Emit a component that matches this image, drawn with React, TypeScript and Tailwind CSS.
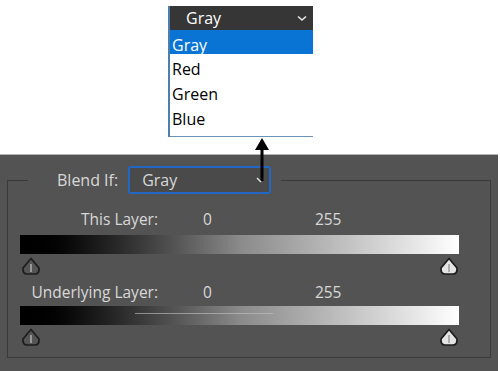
import React from "react";

function Slider({ filled }: { filled: boolean }) {
  return (
    <svg width="20" height="19" viewBox="0 0 20 19">
      <path
        d="M10 1.5 L18 11 Q18.5 17 14 17 H6 Q1.5 17 2 11 Z"
        fill={filled ? "#e4e4e4" : "#555555"}
        stroke="#1c1c1c"
        strokeWidth="1.7"
        strokeLinejoin="round"
      />
      <line x1="10" y1="7" x2="10" y2="15" stroke={filled ? "#8a8a8a" : "#c8c8c8"} strokeWidth="1.2" />
    </svg>
  );
}

function Bar({ line }: { line?: boolean }) {
  return (
    <div className="relative ml-[12px] w-[439px] h-[19px] bg-gradient-to-r from-black via-[#8a8a8a] to-white">
      {line && <div className="absolute left-[115px] top-[7px] w-[138px] h-px bg-[#c4c4c4] opacity-60" />}
    </div>
  );
}

export default function App() {
  return (
    <div className="w-[500px] h-[371px] bg-white flex flex-col relative" style={{ fontFamily: '"Open Sans", "Noto Sans", sans-serif' }}>
      <div className="h-[154px] pt-[6px] pl-[168px]">
        <div className="w-[145px] border-l-2 border-[#4d7fae]">
          <div className="h-[24px] bg-[#363636] flex items-center justify-between pl-[16px] pr-[6px] text-white text-[16px]">
            <span>Gray</span>
            <svg width="10" height="7" viewBox="0 0 10 7"><path d="M1 1.5 L5 5 L9 1.5" fill="none" stroke="#e8e8e8" strokeWidth="1.6" /></svg>
          </div>
          <div className="h-[24px] bg-[#0a74d4] text-white text-[16px] flex items-center pl-[2px] pt-[5px] leading-none">Gray</div>
          <div className="h-[25px] text-black text-[16px] flex items-center pl-[2px] pt-[5px] leading-none">Red</div>
          <div className="h-[25px] text-black text-[16px] flex items-center pl-[2px] pt-[5px] leading-none">Green</div>
          <div className="h-[25px] text-black text-[16px] flex items-center pl-[2px] pt-[5px] leading-none">Blue</div>
          <div className="h-[8px] border-b border-[#6a93b8]" />
        </div>
      </div>

      <div className="flex-1 w-[498px] bg-[#535353] border-t border-[#b4b4b4] pt-[11px] text-[#d8d8d8]">
        <fieldset className="mx-[7px] border border-[#3a3a3a] h-[192px]">
          <legend className="ml-[20px] flex items-center pl-[29px] pr-[10px]">
            <span className="text-[16px] mr-[10px]">Blend If:</span>
            <div className="w-[143px] h-[28px] rounded-[3px] border-2 border-[#2466c4] bg-[#4a4a4a] flex items-center justify-between pl-[12px] pr-[6px] text-[16px]">
              <span>Gray</span>
            </div>
          </legend>
          <div className="pt-[16px] text-[15.5px]">
            <div className="h-[20px] flex items-center">
              <span className="w-[150px] text-right">This Layer:</span>
              <span className="ml-[45px]">0</span>
              <span className="ml-[103px]">255</span>
            </div>
            <div className="mt-[5px]"><Bar /></div>
            <div className="mt-[3px] ml-[13px] w-[438px] flex justify-between h-[19px]">
              <Slider filled={false} />
              <Slider filled={true} />
            </div>
            <div className="mt-[7px] h-[20px] flex items-center">
              <span className="w-[150px] text-right">Underlying Layer:</span>
              <span className="ml-[45px]">0</span>
              <span className="ml-[103px]">255</span>
            </div>
            <div className="mt-[3px]"><Bar line /></div>
            <div className="mt-[3px] ml-[13px] w-[438px] flex justify-between h-[19px]">
              <Slider filled={false} />
              <Slider filled={true} />
            </div>
          </div>
        </fieldset>
      </div>

      <svg className="absolute left-[254px] top-[138px]" width="16" height="48" viewBox="0 0 16 48">
        <path d="M8 0 L15 12 H1 Z" fill="#000" />
        <rect x="6.5" y="10" width="3" height="33" fill="#000" />
        <path d="M3 40 L7 44" stroke="#e0e0e0" strokeWidth="1.5" />
      </svg>
    </div>
  );
}
